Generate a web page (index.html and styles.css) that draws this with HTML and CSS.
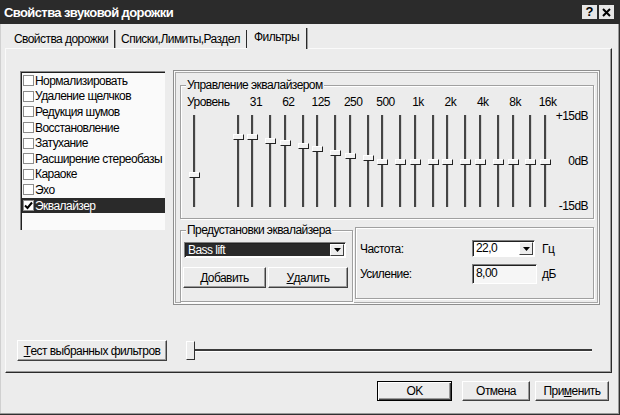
FILE: index.html
```html
<!DOCTYPE html>
<html lang="ru">
<head>
<meta charset="utf-8">
<title>Свойства звуковой дорожки</title>
<link rel="stylesheet" href="styles.css">
</head>
<body>
<div class="window">
  <div class="titlebar">
    <span class="title">Свойства звуковой дорожки</span>
    <div class="tb-btns">
      <span class="tb-btn">?</span>
      <span class="tb-btn"><svg width="9" height="9" viewBox="0 0 9 9"><path d="M1 1 L8 8 M8 1 L1 8" stroke="#000" stroke-width="2"/></svg></span>
    </div>
  </div>

  <div class="tabs">
    <div class="tab t1">Свойства дорожки</div>
    <div class="tab t2">Списки,Лимиты,Раздел</div>
    <div class="tab t3 active">Фильтры</div>
  </div>

  <div class="panel">
    <div class="main">
      <div class="listbox">
        <div class="row"><span class="cb"></span>Нормализировать</div>
        <div class="row"><span class="cb"></span>Удаление щелчков</div>
        <div class="row"><span class="cb"></span>Редукция шумов</div>
        <div class="row"><span class="cb"></span>Восстановление</div>
        <div class="row"><span class="cb"></span>Затухание</div>
        <div class="row"><span class="cb"></span>Расширение стереобазы</div>
        <div class="row"><span class="cb"></span>Караоке</div>
        <div class="row"><span class="cb"></span>Эхо</div>
        <div class="row sel"><span class="cb on"><svg width="9" height="9" viewBox="0 0 9 9"><path d="M1 4.5 L3.5 7 L8 1.5" stroke="#000" stroke-width="2" fill="none"/></svg></span>Эквалайзер</div>
      </div>

      <div class="eqframe">
        <div class="group g-eq">
          <span class="glabel">Управление эквалайзером</span>
          <div class="eq-head">
            <span class="lvl">Уровень</span>
            <span class="fl">31</span><span class="fl">62</span><span class="fl">125</span><span class="fl">250</span><span class="fl">500</span>
            <span class="fl">1k</span><span class="fl">2k</span><span class="fl">4k</span><span class="fl">8k</span><span class="fl">16k</span>
          </div>
          <div class="eq-body">
            <div class="slider"><i class="thumb" style="top:57px"></i></div>
            <div class="pairs">
              <div class="pair"><div class="slider"><i class="thumb" style="top:19px"></i></div><div class="slider"><i class="thumb" style="top:19px"></i></div></div>
              <div class="pair"><div class="slider"><i class="thumb" style="top:23px"></i></div><div class="slider"><i class="thumb" style="top:25px"></i></div></div>
              <div class="pair"><div class="slider"><i class="thumb" style="top:28px"></i></div><div class="slider"><i class="thumb" style="top:31px"></i></div></div>
              <div class="pair"><div class="slider"><i class="thumb" style="top:35px"></i></div><div class="slider"><i class="thumb" style="top:38px"></i></div></div>
              <div class="pair"><div class="slider"><i class="thumb" style="top:40px"></i></div><div class="slider"><i class="thumb" style="top:44px"></i></div></div>
              <div class="pair"><div class="slider"><i class="thumb" style="top:44px"></i></div><div class="slider"><i class="thumb" style="top:44px"></i></div></div>
              <div class="pair"><div class="slider"><i class="thumb" style="top:44px"></i></div><div class="slider"><i class="thumb" style="top:44px"></i></div></div>
              <div class="pair"><div class="slider"><i class="thumb" style="top:44px"></i></div><div class="slider"><i class="thumb" style="top:44px"></i></div></div>
              <div class="pair"><div class="slider"><i class="thumb" style="top:44px"></i></div><div class="slider"><i class="thumb" style="top:44px"></i></div></div>
              <div class="pair"><div class="slider"><i class="thumb" style="top:44px"></i></div><div class="slider"><i class="thumb" style="top:44px"></i></div></div>
            </div>
            <div class="db"><span>+15dB</span><span>0dB</span><span>-15dB</span></div>
          </div>
        </div>

        <div class="lower">
          <div class="group g-pre">
            <span class="glabel">Предустановки эквалайзера</span>
            <div class="combo pre-combo">
              <span class="cval dark">Bass lift</span>
              <span class="cbtn"><svg width="7" height="4" viewBox="0 0 7 4"><path d="M0 0 H7 L3.5 4 Z" fill="#000"/></svg></span>
            </div>
            <div class="pre-btns">
              <div class="btn b-add"><u>Д</u>обавить</div>
              <div class="btn b-del"><u>У</u>далить</div>
            </div>
          </div>
          <div class="freqbox">
            <div class="fb-row">
              <span class="fb-label">Частота:</span>
              <div class="combo fb-combo">
                <span class="cval">22,0</span>
                <span class="cbtn"><svg width="7" height="4" viewBox="0 0 7 4"><path d="M0 0 H7 L3.5 4 Z" fill="#000"/></svg></span>
              </div>
              <span class="unit u1">Гц</span>
            </div>
            <div class="fb-row r2">
              <span class="fb-label">Усиление:</span>
              <div class="input">8,00</div>
              <span class="unit u2">дБ</span>
            </div>
          </div>
        </div>
      </div>
    </div>

    <div class="testrow">
      <div class="btn b-test"><u>Т</u>ест выбранных фильтров</div>
      <div class="hslider"><i class="hthumb"></i></div>
    </div>
  </div>

  <div class="footer">
    <div class="btn b-ok">OK</div>
    <div class="btn b-cancel">Отмена</div>
    <div class="btn b-apply">При<u>м</u>енить</div>
  </div>
</div>
</body>
</html>
```

FILE: styles.css
```css
* { box-sizing: border-box; }
body {
  margin: 0;
  font-family: "Liberation Sans", Arial, sans-serif;
  font-size: 12px;
  letter-spacing: -0.55px;
  color: #000;
  background: #ececec;
}
.window {
  width: 620px;
  height: 415px;
  background: #ececec;
  overflow: hidden;
  box-shadow: inset -1px -1px 0 #303030, inset -2px -2px 0 #9a9a9a, inset 1px 0 0 #d0d0d0;
}
.titlebar {
  height: 24px;
  background: #2b2b2b;
  display: flex;
  align-items: center;
  padding: 0 6px 0 4px;
}
.title {
  color: #fff;
  font-weight: bold;
  font-size: 13px;
  letter-spacing: -0.6px;
}
.tb-btns {
  margin-left: auto;
  display: flex;
  gap: 2px;
}
.tb-btn {
  width: 15px;
  height: 14px;
  background: #e6e6e6;
  display: flex;
  align-items: center;
  justify-content: center;
  font-weight: bold;
  font-size: 13px;
  letter-spacing: 0;
  line-height: 14px;
}

/* tabs */
.tabs {
  display: flex;
  height: 24px;
  padding-left: 8px;
}
.tab {
  height: 18px;
  margin-top: 6px;
  display: flex;
  align-items: center;
  justify-content: center;
  border-right: 1px solid #2a2a2a;
  box-shadow: 1px 0 0 #a0a0a0;
  white-space: nowrap;
}
.t1 { width: 107px; }
.t2 { width: 132px; }
.t3 { width: 60px; }
.tab.active {
  height: 21px;
  margin-top: 4px;
  align-items: flex-start;
  padding-top: 2px;
  position: relative;
  z-index: 1;
  background: #ececec;
}

/* panel */
.panel {
  margin-left: 5px;
  width: 607px;
  height: 325px;
  border-top: 1px solid #fafafa;
  border-left: 1px solid #fafafa;
  border-right: 1px solid #2a2a2a;
  border-bottom: 1px solid #2a2a2a;
  box-shadow: inset -1px -1px 0 #9a9a9a;
}
.main {
  display: flex;
  padding: 22px 0 0 14px;
}

/* listbox */
.listbox {
  width: 145px;
  height: 159px;
  background: #fafafa;
  border-top: 1px solid #8a8a8a;
  border-left: 1px solid #8a8a8a;
  box-shadow: inset 1px 1px 0 #202020;
  padding: 1px 0 0 1px;
}
.row {
  height: 15.6px;
  display: flex;
  align-items: center;
  gap: 1px;
  padding-left: 1px;
  white-space: nowrap;
}
.row.sel {
  background: #2a2a2a;
  color: #fff;
}
.cb {
  width: 11px;
  height: 11px;
  background: #fff;
  border: 1px solid #8c8c8c;
  display: flex;
  align-items: center;
  justify-content: center;
  flex: none;
}

/* eq frame */
.eqframe {
  margin-left: 8px;
  margin-top: -1px;
  width: 427px;
  height: 235px;
  border: 1px solid #8e8e8e;
  box-shadow: inset 0 0 0 1px #fafafa, inset 0 0 0 2px #a8a8a8;
  padding: 14px 5px 0 6px;
}
.group {
  position: relative;
  border: 1px solid #a0a0a0;
  box-shadow: 1px 1px 0 #fff, inset 1px 1px 0 #fff;
}
.glabel {
  position: absolute;
  top: -8px;
  left: 5px;
  padding: 0 1px;
  background: #ececec;
  line-height: 14px;
  white-space: nowrap;
}
.g-eq {
  width: 414px;
  height: 134px;
}
.eq-head {
  display: flex;
  height: 14px;
  line-height: 14px;
  margin-top: 9px;
  padding-left: 6px;
}
.lvl { width: 52.8px; flex: none; }
.fl { width: 32.4px; flex: none; text-align: center; }
.eq-body {
  display: flex;
  height: 92px;
  margin-top: 6px;
  padding: 0 5px 0 7.5px;
}
.pairs {
  display: flex;
  margin-left: 33px;
}
.pair {
  display: flex;
  gap: 3.7px;
  width: 32.55px;
  flex: none;
}
.pair:last-child { width: auto; }
.slider {
  position: relative;
  width: 11px;
  height: 92px;
  flex: none;
}
.slider::before {
  content: "";
  position: absolute;
  left: 4px;
  top: 0;
  bottom: 0;
  width: 2px;
  background: #454545;
  box-shadow: 1px 0 0 #d4d4d4;
}
.thumb {
  position: absolute;
  left: 0;
  width: 11px;
  height: 6px;
  background: #f2f2f2;
  border: 1px solid;
  border-color: #fff #222 #222 #fff;
}
.db {
  margin-left: auto;
  align-self: flex-start;
  margin-top: -6px;
  height: 104px;
  display: flex;
  flex-direction: column;
  justify-content: space-between;
  align-items: flex-end;
  line-height: 14px;
}

/* lower */
.lower {
  display: flex;
  margin-top: 11px;
}
.g-pre {
  width: 173px;
  height: 72px;
  padding: 11px 0 0 3px;
}
.combo {
  display: flex;
  border-top: 1px solid #808080;
  border-left: 1px solid #808080;
  border-bottom: 1px solid #fff;
  border-right: 1px solid #fff;
  box-shadow: inset 1px 1px 0 #202020;
  background: #fff;
  padding: 1px 1px 1px 1px;
}
.pre-combo {
  width: 162px;
  height: 16px;
}
.cval {
  flex: 1;
  line-height: 13px;
  padding-left: 2px;
  white-space: nowrap;
}
.cval.dark {
  background: #2a2a2a;
  color: #fff;
}
.cbtn {
  width: 14px;
  flex: none;
  background: #ececec;
  border: 1px solid;
  border-color: #fff #404040 #404040 #fff;
  display: flex;
  align-items: center;
  justify-content: center;
}
.pre-btns {
  display: flex;
  gap: 2px;
  margin-top: 9px;
  margin-left: -1px;
}
.btn {
  height: 21px;
  display: flex;
  align-items: center;
  justify-content: center;
  background: #ececec;
  border: 1px solid;
  border-color: #fff #404040 #404040 #fff;
  box-shadow: inset -1px -1px 0 #9a9a9a;
  white-space: nowrap;
}
.b-add { width: 83px; }
.b-del { width: 80px; }

.freqbox {
  margin-left: 2px;
  margin-top: -3px;
  width: 239px;
  height: 72px;
  border: 1px solid #a0a0a0;
  box-shadow: 1px 1px 0 #fff, inset 1px 1px 0 #fff;
  padding: 12px 0 0 4px;
}
.fb-row {
  display: flex;
  align-items: center;
  height: 17px;
}
.fb-row.r2 {
  height: 20px;
  margin-top: 7px;
}
.fb-label { width: 112px; flex: none; }
.fb-combo {
  width: 63px;
  height: 17px;
}
.input {
  width: 65px;
  height: 20px;
  border-top: 1px solid #808080;
  border-left: 1px solid #808080;
  border-bottom: 1px solid #fff;
  border-right: 1px solid #fff;
  box-shadow: inset 1px 1px 0 #202020;
  background: #f6f6f6;
  padding: 1px 0 0 3px;
  line-height: 14px;
}
.unit.u1 { margin-left: 7px; }
.unit.u2 { margin-left: 5px; }

/* test row */
.testrow {
  display: flex;
  margin-top: 35px;
  padding-left: 11px;
}
.b-test { width: 150px; }
.hslider {
  position: relative;
  margin-left: 18px;
  width: 407px;
  height: 21px;
}
.hslider::before {
  content: "";
  position: absolute;
  left: 2px;
  right: 0;
  top: 9px;
  height: 2px;
  background: #3a3a3a;
  border-bottom: 1px solid #fff;
}
.hthumb {
  position: absolute;
  left: 1px;
  top: 1px;
  width: 9px;
  height: 19px;
  background: #ececec;
  border: 1px solid;
  border-color: #fff #303030 #303030 #fff;
}

/* footer */
.footer {
  display: flex;
  justify-content: flex-end;
  padding: 8px 11px 0 0;
}
.b-ok {
  width: 75px;
  height: 20px;
  border: 1px solid #000;
  box-shadow: inset 1px 1px 0 #fff, inset -1px -1px 0 #404040, inset -2px -2px 0 #9a9a9a;
}
.b-cancel { width: 68px; height: 20px; margin-left: 10px; }
.b-apply { width: 74px; height: 20px; margin-left: 5px; }
```
